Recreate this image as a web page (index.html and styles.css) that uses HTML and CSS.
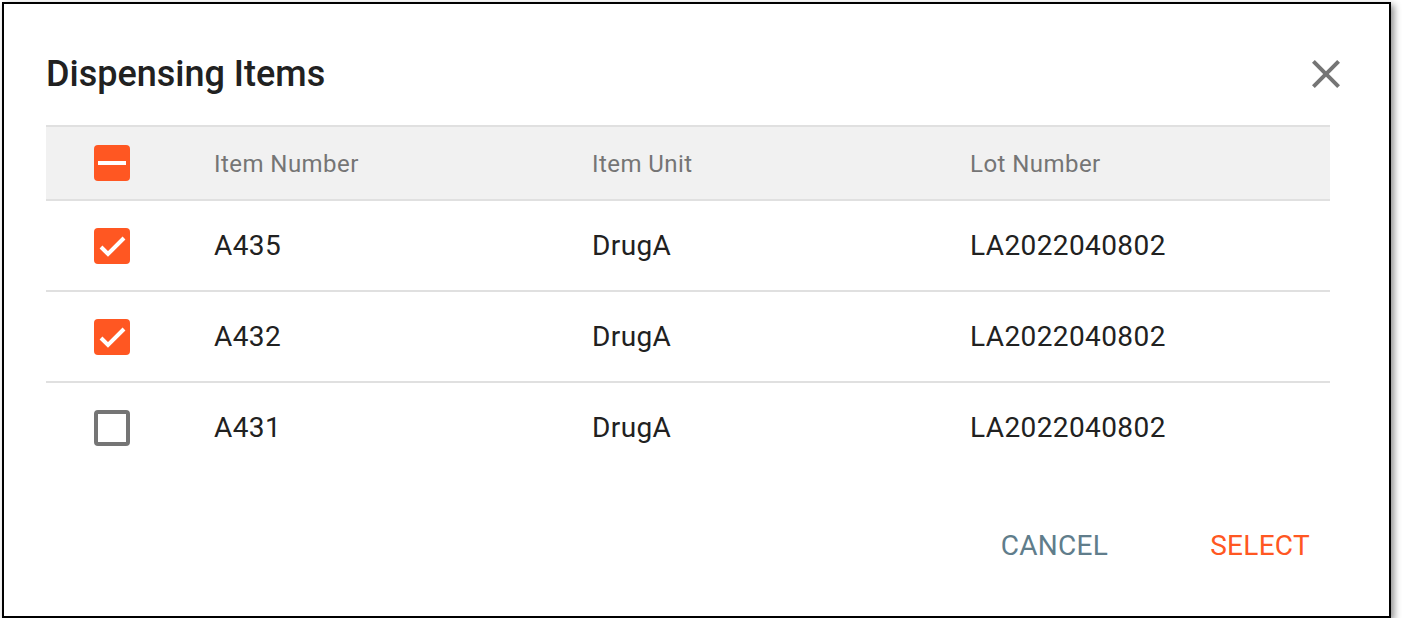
FILE: index.html
```html
<!DOCTYPE html>
<html lang="en">
<head>
<meta charset="utf-8">
<title>Dispensing Items</title>
<link rel="stylesheet" href="styles.css">
</head>
<body>
<div class="dialog">
  <div class="dialog-header">
    <h1 class="dialog-title">Dispensing Items</h1>
    <button class="close-btn" aria-label="Close">
      <svg width="48" height="48" viewBox="0 0 24 24"><path fill="#757575" d="M19 6.41L17.59 5 12 10.59 6.41 5 5 6.41 10.59 12 5 17.59 6.41 19 12 13.41 17.59 19 19 17.59 13.41 12z"/></svg>
    </button>
  </div>
  <div class="table">
    <div class="row head">
      <div class="cell cb-cell"><span class="cb checked"><svg width="36" height="36" viewBox="0 0 36 36"><rect x="4" y="16" width="28" height="4" fill="#fff"/></svg></span></div>
      <div class="cell">Item Number</div>
      <div class="cell">Item Unit</div>
      <div class="cell">Lot Number</div>
    </div>
    <div class="row">
      <div class="cell cb-cell"><span class="cb checked"><svg width="36" height="36" viewBox="0 0 36 36"><path d="M7 19L14 26L30 10" fill="none" stroke="#fff" stroke-width="4"/></svg></span></div>
      <div class="cell">A435</div>
      <div class="cell">DrugA</div>
      <div class="cell">LA2022040802</div>
    </div>
    <div class="row">
      <div class="cell cb-cell"><span class="cb checked"><svg width="36" height="36" viewBox="0 0 36 36"><path d="M7 19L14 26L30 10" fill="none" stroke="#fff" stroke-width="4"/></svg></span></div>
      <div class="cell">A432</div>
      <div class="cell">DrugA</div>
      <div class="cell">LA2022040802</div>
    </div>
    <div class="row last">
      <div class="cell cb-cell"><span class="cb"></span></div>
      <div class="cell">A431</div>
      <div class="cell">DrugA</div>
      <div class="cell">LA2022040802</div>
    </div>
  </div>
  <div class="actions">
    <button class="btn cancel">CANCEL</button>
    <button class="btn select">SELECT</button>
  </div>
</div>
</body>
</html>
```

FILE: styles.css
```css
html, body {
  margin: 0;
  padding: 0;
  background: #fff;
}
body {
  font-family: Roboto, "Liberation Sans", sans-serif;
  padding: 2px 0 0 2px;
}
.dialog {
  box-sizing: border-box;
  width: 1389px;
  height: 616px;
  border: 2px solid #000;
  background: #fff;
  box-shadow: 3px 3px 7px rgba(0, 0, 0, 0.45);
  padding: 46px 39px 0 42px;
}
.dialog-header {
  display: flex;
  align-items: center;
  justify-content: space-between;
}
.dialog-title {
  margin: 0;
  font-size: 36px;
  line-height: 44px;
  font-weight: 500;
  color: #212121;
}
.close-btn {
  border: 0;
  background: none;
  padding: 0;
  width: 48px;
  height: 48px;
  display: block;
}
.close-btn svg { display: block; }
.table {
  margin: 27px 20px 0 0;
  border-top: 2px solid #e0e0e0;
}
.row {
  display: grid;
  grid-template-columns: 168px 378px 378px 1fr;
  align-items: center;
  height: 89px;
  border-bottom: 2px solid #e0e0e0;
  font-size: 28px;
  letter-spacing: 0.4px;
  color: #212121;
}
.row.last { border-bottom: 0; }
.row.head {
  height: 71px;
  padding-top: 1px;
  background: #f1f1f1;
  font-size: 24px;
  letter-spacing: 0.45px;
  color: #757575;
}
.cell {
  white-space: nowrap;
}
.cb-cell {
  padding-left: 48px;
  display: flex;
  align-items: center;
}
.row.head .cb-cell { margin-top: -1px; }
.cb {
  box-sizing: border-box;
  width: 36px;
  height: 36px;
  border-radius: 4px;
  border: 4px solid #757575;
  display: block;
}
.cb.checked {
  border: 0;
  background: #ff5722;
}
.cb svg { display: block; }
.actions {
  display: flex;
  justify-content: flex-end;
  margin: 38px 20px 0 0;
  gap: 60px;
}
.btn {
  border: 0;
  background: none;
  font-family: Roboto, "Liberation Sans", sans-serif;
  font-size: 28px;
  letter-spacing: 0.3px;
  line-height: 72px;
  height: 72px;
  padding: 0 20px 0 22px;
}
.cancel { color: #607d8b; }
.select { color: #ff5722; }
```
